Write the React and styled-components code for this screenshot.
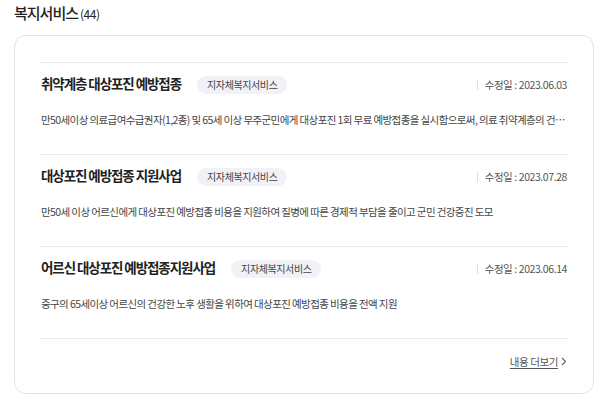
import React from 'react';
import styled, { createGlobalStyle } from 'styled-components';

const GlobalStyle = createGlobalStyle`
	html, body {
		margin: 0;
		padding: 0;
		background: #fff;
	}
	body {
		font-family: "Noto Sans CJK KR", "Noto Sans", sans-serif;
		color: #222;
		width: 600px;
	}
`;

const Section = styled.section`
	padding: 2px 6px 0 14px;
`;

const Heading = styled.h2`
	margin: 0;
	font-size: 15px;
	font-weight: 500;
	line-height: 22px;
	letter-spacing: -1px;
	color: #222;
`;

const Count = styled.span`
	font-size: 12px;
	font-weight: 400;
	letter-spacing: -0.5px;
	margin-left: 2px;
`;

const Card = styled.div`
	margin-top: 10px;
	border: 1px solid #e3e3e3;
	border-radius: 12px;
	padding: 26px 26px 24px 26px;
`;

const List = styled.ul`
	list-style: none;
	margin: 0;
	padding: 0;
	border-top: 1px solid #e9e9e9;
`;

const Item = styled.li`
	padding: 11px 0 26px;
	border-bottom: 1px solid #e9e9e9;
`;

const TitleRow = styled.div`
	display: flex;
	align-items: center;
	height: 18px;
`;

const Title = styled.strong`
	font-size: 13.5px;
	font-weight: 700;
	letter-spacing: -0.08em;
	color: #222;
`;

const Tag = styled.span`
	margin-left: 16px;
	margin-top: 4px;
	padding: 0 10px;
	height: 18px;
	line-height: 18px;
	border-radius: 9px;
	background: #f1f1f8;
	font-size: 10px;
	color: #444;
	letter-spacing: -0.04em;
`;

const DateText = styled.span`
	margin-left: auto;
	margin-top: 3px;
	display: flex;
	align-items: center;
	font-size: 10.5px;
	color: #555;
	letter-spacing: -0.04em;

	&::before {
		content: '';
		width: 1px;
		height: 10px;
		background: #ddd;
		margin-right: 7px;
	}
`;

const Desc = styled.p`
	margin: 20px 0 0;
	font-size: 10.5px;
	line-height: 16px;
	color: #444;
	letter-spacing: -0.057em;
	white-space: nowrap;
	overflow: hidden;
	text-overflow: ellipsis;
`;

const More = styled.div`
	margin-top: 14px;
	display: flex;
	justify-content: flex-end;
	align-items: center;
	height: 16px;
`;

const MoreLink = styled.a`
	font-size: 10.5px;
	color: #555;
	text-decoration: underline;
	text-underline-offset: 2px;
	letter-spacing: -0.04em;
	display: flex;
	align-items: center;
	gap: 3px;
`;

const items = [
	{
		title: '취약계층 대상포진 예방접종',
		tag: '지자체복지서비스',
		date: '2023.06.03',
		desc: '만50세이상 의료급여수급권자(1,2종) 및 65세 이상 무주군민에게 대상포진 1회 무료 예방접종을 실시함으로써, 의료 취약계층의 건강증진 및 질병예방에 기여',
	},
	{
		title: '대상포진 예방접종 지원사업',
		tag: '지자체복지서비스',
		date: '2023.07.28',
		desc: '만50세 이상 어르신에게 대상포진 예방접종 비용을 지원하여 질병에 따른 경제적 부담을 줄이고 군민 건강증진 도모',
	},
	{
		title: '어르신 대상포진 예방접종지원사업',
		tag: '지자체복지서비스',
		date: '2023.06.14',
		desc: '중구의 65세이상 어르신의 건강한 노후 생활을 위하여 대상포진 예방접종 비용을 전액 지원',
	},
];

const App = () => {
	return (
		<>
			<GlobalStyle />
			<Section>
				<Heading>
					복지서비스<Count>(44)</Count>
				</Heading>
				<Card>
					<List>
						{items.map(item => (
							<Item key={item.title}>
								<TitleRow>
									<Title>{item.title}</Title>
									<Tag>{item.tag}</Tag>
									<DateText>수정일 : {item.date}</DateText>
								</TitleRow>
								<Desc>{item.desc}</Desc>
							</Item>
						))}
					</List>
					<More>
						<MoreLink href="#">
							<span>내용 더보기</span>
							<svg width="6" height="9" viewBox="0 0 6 9" fill="none">
								<path d="M1 1l3.5 3.5L1 8" stroke="#666" strokeWidth="1.1" />
							</svg>
						</MoreLink>
					</More>
				</Card>
			</Section>
		</>
	);
};

export default App;
